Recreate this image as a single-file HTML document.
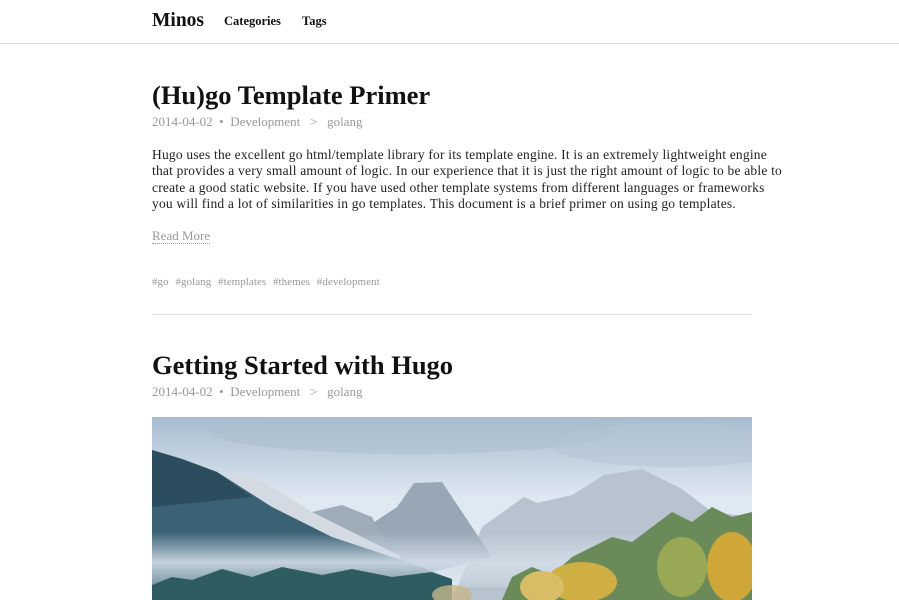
<!DOCTYPE html>
<html><head><meta charset="utf-8"><style>
*{margin:0;padding:0;box-sizing:border-box}
body{width:899px;height:600px;overflow:hidden;background:#fff;font-family:"Liberation Serif",serif;color:#222}
.nav{height:44px;border-bottom:1px solid #ddd;position:relative}
.logo{position:absolute;left:152px;top:10px;font-size:19.5px;font-weight:bold;color:#111}
.nav a{position:absolute;top:14px;font-size:12.5px;font-weight:bold;color:#111}
h1{position:absolute;left:152px;font-size:26.5px;font-weight:bold;color:#111;white-space:nowrap}
.meta{position:absolute;left:152px;font-size:13px;color:#999;white-space:nowrap}
.body{position:absolute;left:152px;top:147px;font-size:13.5px;letter-spacing:0.2px;line-height:16.3px;color:#222;white-space:nowrap}
.rm{position:absolute;left:152px;top:228px;font-size:13px;color:#999;border-bottom:1px dotted #999;line-height:15px}
.tags{position:absolute;left:152px;top:276px;font-size:11px;letter-spacing:0.05px;color:#999;word-spacing:4px}
.hr{position:absolute;left:152px;top:314px;width:600px;border-top:1px solid #ddd}
</style></head><body>
<div class="nav"><div class="logo">Minos</div><a style="left:224px">Categories</a><a style="left:302px">Tags</a></div>
<h1 style="top:80px">(Hu)go Template Primer</h1>
<div class="meta" style="top:114px">2014-04-02 &nbsp;•&nbsp; Development &nbsp;&nbsp;&gt;&nbsp;&nbsp; golang</div>
<div class="body">Hugo uses the excellent go html/template library for its template engine. It is an extremely lightweight engine<br>that provides a very small amount of logic. In our experience that it is just the right amount of logic to be able to<br>create a good static website. If you have used other template systems from different languages or frameworks<br>you will find a lot of similarities in go templates. This document is a brief primer on using go templates.</div>
<div class="rm">Read More</div>
<div class="tags">#go #golang #templates #themes #development</div>
<div class="hr"></div>
<h1 style="top:350px">Getting Started with Hugo</h1>
<div class="meta" style="top:384px">2014-04-02 &nbsp;•&nbsp; Development &nbsp;&nbsp;&gt;&nbsp;&nbsp; golang</div>
<svg style="position:absolute;left:152px;top:417px" width="600" height="183" viewBox="0 0 600 183">
<defs>
<linearGradient id="sky" x1="0" y1="0" x2="0" y2="1"><stop offset="0" stop-color="#a7bbcf"/><stop offset="0.45" stop-color="#dfe9f2"/><stop offset="1" stop-color="#e3ebf2"/></linearGradient>
<linearGradient id="fog" x1="0" y1="0" x2="0" y2="1"><stop offset="0" stop-color="#d3dee8" stop-opacity="0"/><stop offset="0.55" stop-color="#d3dee8" stop-opacity="0.9"/><stop offset="1" stop-color="#d3dee8" stop-opacity="0.4"/></linearGradient>
</defs>
<rect width="600" height="183" fill="url(#sky)"/>
<ellipse cx="260" cy="15" rx="200" ry="22" fill="#aabdce" opacity="0.5"/>
<ellipse cx="520" cy="28" rx="120" ry="22" fill="#b3c4d4" opacity="0.5"/>
<polygon points="300,183 330,110 372,80 385,86 420,78 452,58 490,52 530,72 560,95 600,100 600,183" fill="#b7c3cf"/>
<polygon points="215,110 245,90 262,66 290,65 300,80 320,110 340,140 260,160" fill="#98a7b6"/>
<polygon points="160,95 190,88 220,100 240,140 200,150" fill="#9eacba"/>
<polygon points="65,55 90,56 120,70 160,95 200,115 250,140 230,150 150,120" fill="#d3dae2"/>
<polygon points="0,33 30,42 65,55 120,90 180,120 270,150 300,165 0,170" fill="#3a6174"/>
<polygon points="0,33 30,42 65,55 100,80 0,90" fill="#2b4d5e"/>
<rect y="115" width="600" height="55" fill="url(#fog)"/>
<polygon points="0,183 0,168 20,160 40,163 70,152 100,160 130,150 170,158 200,152 240,160 280,155 300,162 300,183" fill="#2f5c60"/>
<polygon points="350,183 360,160 380,150 400,158 420,140 440,130 460,120 480,125 500,110 520,95 540,105 560,90 580,100 600,95 600,183" fill="#6a8a5a"/>
<ellipse cx="430" cy="165" rx="35" ry="20" fill="#cfae44"/>
<ellipse cx="390" cy="170" rx="22" ry="16" fill="#d8bd66"/>
<ellipse cx="580" cy="150" rx="25" ry="35" fill="#cfa638"/>
<ellipse cx="530" cy="150" rx="25" ry="30" fill="#98a854"/>
<ellipse cx="300" cy="178" rx="20" ry="10" fill="#c6b789" opacity="0.8"/>
</svg>
</body></html>
